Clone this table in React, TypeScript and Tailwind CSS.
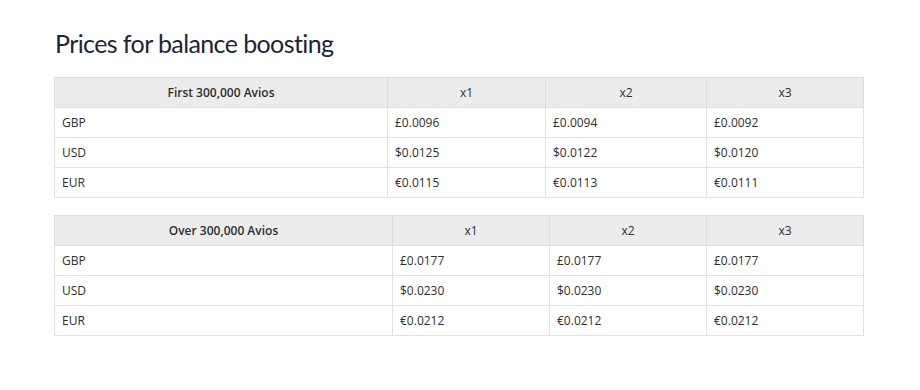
import React from "react";

type Row = [string, string, string, string];

const t1: Row[] = [
  ["GBP", "£0.0096", "£0.0094", "£0.0092"],
  ["USD", "$0.0125", "$0.0122", "$0.0120"],
  ["EUR", "€0.0115", "€0.0113", "€0.0111"],
];
const t2: Row[] = [
  ["GBP", "£0.0177", "£0.0177", "£0.0177"],
  ["USD", "$0.0230", "$0.0230", "$0.0230"],
  ["EUR", "€0.0212", "€0.0212", "€0.0212"],
];

function PriceTable({ title, rows, widths }: { title: string; rows: Row[]; widths: number[] }) {
  return (
    <table className="border-collapse table-fixed w-[809px] text-[12px] text-[#2e2e2e]">
      <colgroup>
        {widths.map((w, i) => (
          <col key={i} style={{ width: w }} />
        ))}
      </colgroup>
      <thead>
        <tr className="bg-[#ececec] h-[30px]">
          <th className="border border-[#dedede] font-semibold text-center">{title}</th>
          <th className="border border-[#dedede] font-normal text-center">x1</th>
          <th className="border border-[#dedede] font-normal text-center">x2</th>
          <th className="border border-[#dedede] font-normal text-center">x3</th>
        </tr>
      </thead>
      <tbody>
        {rows.map((r) => (
          <tr key={r[0]} className="h-[30px]">
            {r.map((c, i) => (
              <td key={i} className="border border-[#e2e2e2] px-[7px] text-left">
                {c}
              </td>
            ))}
          </tr>
        ))}
      </tbody>
    </table>
  );
}

export default function App() {
  return (
    <div
      className="w-[920px] h-[390px] bg-white pl-[54px] pt-[26px]"
      style={{ fontFamily: '"Open Sans", "Noto Sans", sans-serif' }}
    >
      <h1
        className="text-[25px] leading-[34px] text-[#1d2438] font-normal pl-[1px] tracking-[-0.6px]"
        style={{ fontFamily: 'Lato, "Open Sans", sans-serif', fontVariantLigatures: "none" }}
      >
        Prices for balance boosting
      </h1>
      <div className="mt-[17px]">
        <PriceTable title="First 300,000 Avios" rows={t1} widths={[333, 158, 161, 157]} />
      </div>
      <div className="mt-[17px]">
        <PriceTable title="Over 300,000 Avios" rows={t2} widths={[338, 157, 157, 157]} />
      </div>
    </div>
  );
}
